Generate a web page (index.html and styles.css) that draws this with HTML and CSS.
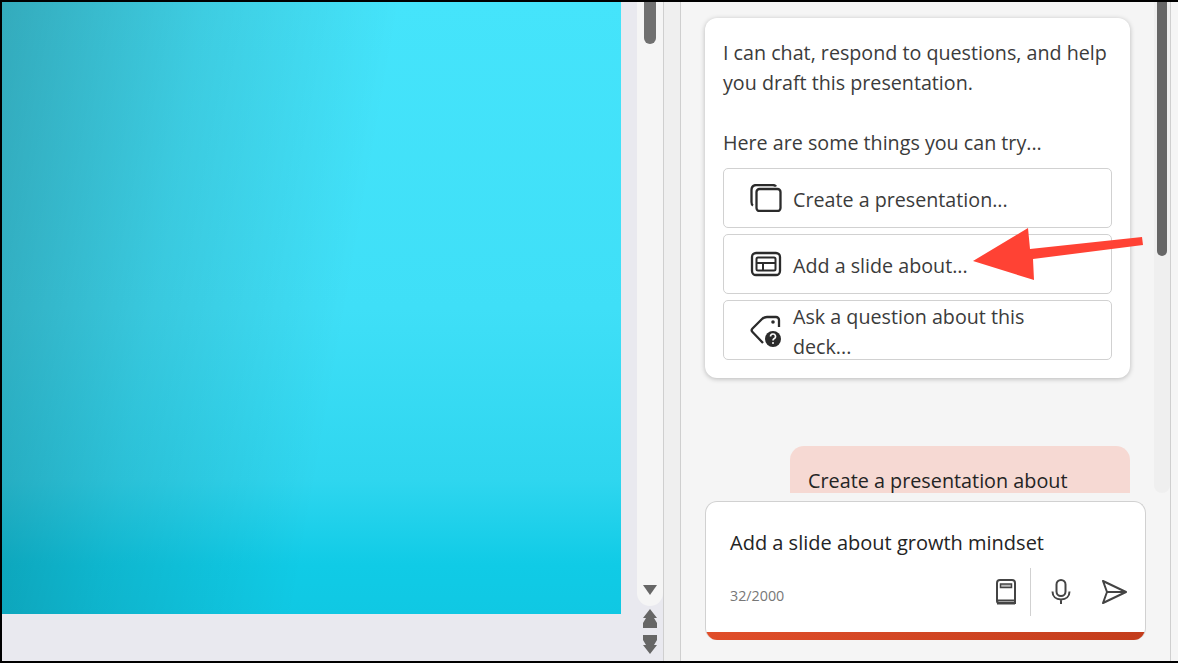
FILE: index.html
```html
<!DOCTYPE html>
<html lang="en">
<head>
    <meta charset="UTF-8">
    <title>Copilot pane</title>
    <link rel="stylesheet" href="styles.css">
</head>
<body>
    <div class="window">
        <div class="slide-area">
            <div class="slide"></div>
        </div>
        <div class="slide-scroll">
            <div class="slide-track">
                <div class="slide-thumb"></div>
                <svg class="arrow-down" width="14" height="10" viewBox="0 0 14 10"><path d="M0 0h14L7 10z"/></svg>
            </div>
            <svg class="page-btn" width="16" height="19" viewBox="0 0 16 19"><path d="M8 0l7 9h-3l3 5v5H1v-5l3-5H1z"/></svg>
            <svg class="page-btn" width="16" height="19" viewBox="0 0 16 19"><path d="M1 0h14v5l-3 5h3l-7 9-7-9h3L1 5z"/></svg>
        </div>
        <div class="strip"></div>

        <div class="pane">
            <div class="pane-top">
                <div class="messages">
                    <div class="card">
                        <p>I can chat, respond to questions, and help you draft this presentation.</p>
                        <p class="try">Here are some things you can try...</p>
                        <div class="suggestions">
                            <div class="suggestion">
                                <svg width="32" height="28" viewBox="0 0 32 28" fill="none" stroke="#2b2b2b" stroke-width="2.300">
                                    <rect x="6.500" y="5" width="24" height="22" rx="3"/>
                                    <path d="M3 21.500C2 21 1.500 20 1.500 18V6c0-3 2-5 5-5h16c2 0 3 .5 3.500 1.500"/>
                                </svg>
                                <span>Create a presentation...</span>
                            </div>
                            <div class="suggestion">
                                <svg width="32" height="28" viewBox="0 0 32 28" fill="none" stroke="#2b2b2b" stroke-width="2.300">
                                    <rect x="2" y="3" width="28" height="22" rx="4"/>
                                    <rect x="6.500" y="7.500" width="19" height="13" rx="1.500" stroke-width="2"/>
                                    <path d="M6.500 13h19M13 13v7.500" stroke-width="2"/>
                                </svg>
                                <span>Add a slide about...</span>
                            </div>
                            <div class="suggestion">
                                <svg width="32" height="34" viewBox="0 -1 32 34" fill="none" stroke="#2b2b2b" stroke-width="2.300">
                                    <path d="M13 29L2.500 18a2.500 2.500 0 0 1 0-3.500L12 5c1.500-1.500 3-2 5-2h9a3 3 0 0 1 3 3v7"/>
                                    <circle cx="23" cy="8" r="1.800" fill="#2b2b2b" stroke="none"/>
                                    <circle cx="23" cy="25" r="8" fill="#2b2b2b" stroke="none"/>
                                    <path d="M20.500 22.500a2.500 2.500 0 1 1 3.500 2.300c-.7.4-1 .8-1 1.700" stroke="#fff" stroke-width="1.600"/>
                                    <circle cx="23" cy="29" r="1" fill="#fff" stroke="none"/>
                                </svg>
                                <span>Ask a question about this deck...</span>
                            </div>
                        </div>
                    </div>
                    <div class="user-msg">Create a presentation about</div>
                </div>
                <div class="pane-scroll">
                    <div class="pane-thumb"></div>
                </div>
            </div>

            <div class="composer">
                <div class="composer-text">Add a slide about growth mindset</div>
                <div class="composer-foot">
                    <span class="count">32/2000</span>
                    <div class="tools">
                        <svg width="24" height="28" viewBox="0 0 24 28" fill="none" stroke="#444" stroke-width="2">
                            <path d="M3 23V5a3 3 0 0 1 3-3h12a3 3 0 0 1 3 3v20H5a2 2 0 0 1-2-2zM3 22.500h18M3 25.500h18"/>
                            <rect x="6.500" y="6" width="11" height="3.500" fill="#bbb" stroke-width="1.500"/>
                        </svg>
                        <div class="tool-sep"></div>
                        <svg class="mic" width="22" height="26" viewBox="0 0 22 26" fill="none" stroke="#444" stroke-width="2">
                            <rect x="6.500" y="1" width="9" height="16" rx="4.500"/>
                            <path d="M2.500 12.500c0 5 3.500 8 8.500 8s8.500-3 8.500-8M11 20.500V25"/>
                        </svg>
                        <svg class="send" width="26" height="26" viewBox="0 0 26 26" fill="none" stroke="#444" stroke-width="2" stroke-linejoin="round">
                            <path d="M2 2l23 11L2 24l4-11zM6 13h19"/>
                        </svg>
                    </div>
                </div>
                <div class="composer-bar"></div>
            </div>
        </div>
        <div class="pane-edge"></div>
    </div>

    <svg class="annotation" width="172" height="54" viewBox="0 0 172 54">
        <path fill="#ff4234" d="M1 33L56 0l2 21 112-12 1 8-110 14 1 21z"/>
    </svg>
</body>
</html>
```

FILE: styles.css
```css
/* General styles */
html, body {
    margin: 0;
    padding: 0;
    height: 100%;
    overflow: hidden;
}

body {
    font-family: "Open Sans", "Noto Sans", sans-serif;
    color: #3b3b3b;
    background-color: #000;
}

.window {
    display: flex;
    height: 659px;
    margin: 2px 0 2px 2px;
    background-color: #e9e9ef;
}

/* Slide side */
.slide-area {
    width: 635px;
    flex: none;
}

.slide {
    width: 619px;
    height: 612px;
    background:
        linear-gradient(100deg, rgba(0, 0, 0, 0.25) 0%, rgba(0, 0, 0, 0.1) 28%, rgba(0, 0, 0, 0) 55%),
        linear-gradient(180deg, #45e4fb 0%, #3fdff7 50%, #2fd6ef 78%, #10cbe6 92%, #10c8e3 100%);
}

.slide-scroll {
    width: 27px;
    flex: none;
    display: flex;
    flex-direction: column;
    align-items: center;
    border-right: 1px solid #cfcfcf;
    box-sizing: border-box;
}

.slide-track {
    width: 26px;
    height: 604px;
    background-color: #f5f5f5;
    border-radius: 0 0 13px 13px;
    display: flex;
    flex-direction: column;
    align-items: center;
}

.slide-thumb {
    width: 12px;
    height: 42px;
    background-color: #707070;
    border-radius: 0 0 6px 6px;
}

.arrow-down {
    margin-top: auto;
    margin-bottom: 11px;
    fill: #666;
}

.page-btn {
    fill: #666;
    margin-top: 3px;
    margin-bottom: 4px;
}

.strip {
    width: 16px;
    flex: none;
    background-color: #efefef;
    border-right: 1px solid #cfcfcf;
}

/* Copilot pane */
.pane {
    width: 489px;
    flex: none;
    background-color: #f5f5f5;
    display: flex;
    flex-direction: column;
    border-right: 1px solid #cfcfcf;
}

.pane-edge {
    flex: 1;
    background-color: #f5f5f5;
}

.pane-top {
    height: 491px;
    display: flex;
    flex: none;
    overflow: hidden;
}

.messages {
    width: 449px;
    padding: 16px 0 0 24px;
    flex: none;
    overflow: hidden;
}

.pane-scroll {
    width: 16px;
    background-color: #efefef;
    border-radius: 0 0 8px 8px;
    display: flex;
    justify-content: center;
}

.pane-thumb {
    width: 10px;
    height: 254px;
    background-color: #666;
    border-radius: 0 0 5px 5px;
}

.card {
    box-sizing: border-box;
    width: 425px;
    height: 360px;
    padding: 20px 18px 18px;
    background-color: #fff;
    border-radius: 12px;
    box-shadow: 0 1px 5px rgba(0, 0, 0, 0.25);
    font-size: 19.7px;
    line-height: 30px;
}

.card p {
    margin: 0;
}

.card .try {
    margin-top: 30px;
}

.suggestions {
    display: flex;
    flex-direction: column;
    gap: 6px;
    margin-top: 10px;
}

.suggestion {
    box-sizing: border-box;
    height: 60px;
    display: flex;
    align-items: center;
    gap: 11px;
    padding: 0 60px 0 26px;
    border: 1px solid #d1d1d1;
    border-radius: 5px;
}

.suggestion svg {
    flex: none;
}

.suggestion span {
    padding-top: 4px;
}

.user-msg {
    box-sizing: border-box;
    width: 340px;
    height: 100px;
    margin: 68px 0 0 85px;
    padding: 20px 18px;
    background-color: #f6d9d3;
    border-radius: 14px;
    font-size: 19.8px;
    line-height: 30px;
    color: #242424;
}

/* Composer */
.composer {
    box-sizing: border-box;
    width: 441px;
    height: 139px;
    margin: 8px 0 0 24px;
    background-color: #fff;
    border: 1px solid #d1d1d1;
    border-bottom: 0;
    border-radius: 12px;
    display: flex;
    flex-direction: column;
    overflow: hidden;
}

.composer-text {
    padding: 26px 24px 0;
    font-size: 20px;
    line-height: 30px;
    color: #242424;
}

.composer-foot {
    display: flex;
    align-items: center;
    justify-content: space-between;
    padding: 10px 18px 0 24px;
    height: 48px;
}

.count {
    font-size: 14.3px;
    color: #777;
    margin-top: 6px;
}

.tools {
    display: flex;
    align-items: center;
}

.tool-sep {
    width: 1px;
    height: 48px;
    background-color: #d1d1d1;
    margin: 0 19px 0 12px;
}

.mic {
    margin-right: 29px;
}

.composer-bar {
    margin-top: auto;
    height: 8px;
    background: linear-gradient(90deg, #e04e2a, #c33d1c);
}

/* Red arrow drawn over the screenshot */
.annotation {
    position: absolute;
    left: 972px;
    top: 228px;
}
```
